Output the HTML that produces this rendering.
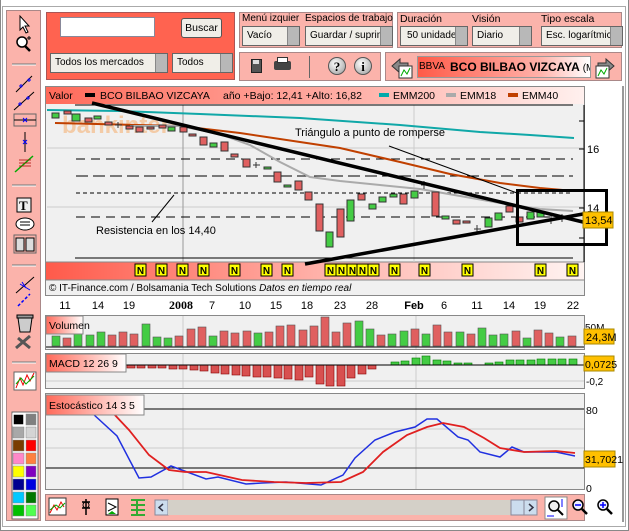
<!DOCTYPE html>
<html><head><meta charset="utf-8"><style>
*{margin:0;padding:0;box-sizing:border-box}
body{width:629px;height:531px;background:#fff;position:relative;overflow:hidden;font-family:"Liberation Sans",sans-serif;font-size:11px;color:#000}
.a{position:absolute}
.pk{background:#fbb3ab;border:1px solid #a88}
.sel{position:absolute;height:20px;background:#f0eee8;border:1px solid #666;font-size:10px;padding:3px 0 0 4px;white-space:nowrap;overflow:hidden}
.sel:after{content:"";position:absolute;right:0;top:0;width:11px;height:18px;background:#b8b8b8;border-left:1px solid #888}
.lb{position:absolute;font-size:10.5px;white-space:nowrap}
</style></head><body>
<div class="a" style="left:0;top:0;width:629px;height:531px;border:1px solid #888;border-top:none"></div>
<div class="a" style="left:2px;top:6px;width:624px;height:521px;border:1px solid #aaa"></div>
<div class="a pk" style="left:6px;top:10px;width:35px;height:511px"></div>
<div class="a" style="left:46px;top:12px;width:189px;height:68px;background:#ff6350;border:1px solid #a55"></div>
<div class="a" style="left:60px;top:17px;width:95px;height:20px;background:#fff;border:1px solid #889"></div>
<div class="a" style="left:181px;top:18px;width:41px;height:20px;background:#f0eee8;border:1px solid #555;border-radius:3px;font-size:10.5px;text-align:center;padding-top:3px">Buscar</div>
<div class="sel" style="left:50px;top:53px;width:118px">Todos los mercados</div>
<div class="sel" style="left:172px;top:53px;width:61px">Todos</div>
<div class="a pk" style="left:239px;top:12px;width:154px;height:36px"></div>
<div class="lb" style="left:242px;top:13px;font-size:10px">Menú izquier</div>
<div class="lb" style="left:305px;top:13px;font-size:10px">Espacios de trabajo</div>
<div class="sel" style="left:242px;top:26px;width:58px">Vacío</div>
<div class="sel" style="left:305px;top:26px;width:88px">Guardar / suprimir</div>
<div class="a pk" style="left:397px;top:12px;width:225px;height:36px"></div>
<div class="lb" style="left:400px;top:13px">Duración</div>
<div class="lb" style="left:472px;top:13px">Visión</div>
<div class="lb" style="left:541px;top:13px">Tipo escala</div>
<div class="sel" style="left:400px;top:26px;width:68px;padding-left:6px">50 unidades</div>
<div class="sel" style="left:472px;top:26px;width:60px">Diario</div>
<div class="sel" style="left:541px;top:26px;width:82px">Esc. logarítmica</div>
<div class="a pk" style="left:239px;top:52px;width:142px;height:29px"></div>
<div class="a" style="left:251px;top:59px;width:11px;height:14px;background:#555;border:1px solid #222"></div>
<div class="a" style="left:253px;top:60px;width:6px;height:4px;background:#ddd"></div>
<div class="a" style="left:274px;top:61px;width:17px;height:9px;background:#444;border-radius:2px"></div>
<div class="a" style="left:277px;top:57px;width:11px;height:6px;background:#fff;border:1px solid #333"></div>
<div class="a" style="left:309px;top:56px;width:1px;height:22px;background:#666"></div>
<div class="a" style="left:328px;top:57px;width:18px;height:18px;border-radius:50%;background:radial-gradient(circle at 40% 35%,#fff,#999);border:1px solid #555;font:bold 13px 'Liberation Serif',serif;text-align:center;line-height:17px">?</div>
<div class="a" style="left:354px;top:57px;width:18px;height:18px;border-radius:50%;background:radial-gradient(circle at 40% 35%,#fff,#999);border:1px solid #555;font:bold 13px 'Liberation Serif',serif;text-align:center;line-height:17px">i</div>
<div class="a pk" style="left:385px;top:52px;width:237px;height:29px"></div>
<div class="a" style="left:417px;top:56px;width:174px;height:22px;border:1px solid #999;background:linear-gradient(90deg,#ff5a48,#ffb0a8 70%,#fff);overflow:hidden">
<span class="lb" style="left:1px;top:4px;font-size:10px">BBVA</span>
<span class="lb" style="left:32px;top:3px;font-weight:bold;font-size:12px">BCO BILBAO VIZCAYA <span style="font-weight:normal;font-size:10px">(M</span></span></div>
<svg class="a" style="left:0;top:0" width="629" height="531" viewBox="0 0 629 531">
<path d="M392 66l8-7v4h8v6h-8v4z" fill="#888" stroke="#333"/><rect x="399" y="66" width="13" height="12" fill="#fff" stroke="#333"/><path d="M401 76l3-6 3 4 3-6" stroke="#0a0" fill="none"/>
<path d="M614 66l-8-7v4h-8v6h8v4z" fill="#888" stroke="#333"/><rect x="596" y="66" width="13" height="12" fill="#fff" stroke="#333"/><path d="M598 76l3-6 3 4 3-6" stroke="#0a0" fill="none"/>
<path d="M20 16v14l3-3 3 6 2-1-3-6h4z" fill="#fff" stroke="#000"/>
<circle cx="22" cy="42" r="5" fill="#fff" stroke="#000" stroke-width="1.5"/><path d="M25 46l5 5" stroke="#000" stroke-width="2.5"/><path d="M27 38h4M29 36v4" stroke="#000"/>
<line x1="12" y1="64" x2="36" y2="64" stroke="#777"/><line x1="12" y1="65" x2="36" y2="65" stroke="#fff"/>
<path d="M16 92l16-16" stroke="#000"/><path d="M19 86h4M21 84v4M27 80h4M29 78v4" stroke="#00f"/>
<path d="M14 110l20-18" stroke="#000"/><path d="M18 104h4M20 102v4M26 98h4M28 96v4" stroke="#00f"/>
<rect x="14" y="114" width="22" height="12" fill="none" stroke="#666"/><path d="M14 120h22" stroke="#000"/><path d="M23 118l4 4M27 118l-4 4" stroke="#00f"/>
<path d="M25 132v20" stroke="#000"/><path d="M23 140l4 4M27 140l-4 4" stroke="#00f"/>
<path d="M15 172l18-16" stroke="#0a0" stroke-width="1.5"/><path d="M19 160h12M19 163h12M19 166h12" stroke="#a00" stroke-width=".7"/>
<line x1="12" y1="185" x2="36" y2="185" stroke="#777"/><line x1="12" y1="186" x2="36" y2="186" stroke="#fff"/>
<rect x="17" y="198" width="14" height="14" fill="#eee" stroke="#000"/><text x="19" y="210" font-family="Liberation Serif" font-weight="bold" font-size="13">T</text>
<ellipse cx="25" cy="224" rx="9" ry="6" fill="#fff" stroke="#000"/><path d="M20 222h10M20 225h10" stroke="#000"/>
<rect x="14" y="235" width="22" height="18" fill="none" stroke="#666"/><path d="M16 238h8v13h-8zM26 238h8v13h-8z" fill="#ddd" stroke="#000"/>
<line x1="12" y1="265" x2="36" y2="265" stroke="#777"/><line x1="12" y1="266" x2="36" y2="266" stroke="#fff"/>
<path d="M16 293l18-16" stroke="#000"/><path d="M20 284l10 6M22 282l4 6" stroke="#00f"/>
<path d="M18 306l12-12" stroke="#00f" stroke-dasharray="3 2" stroke-width="1.5"/>
<path d="M18 318h14l-2 14h-10z" fill="#ccc" stroke="#000"/><rect x="17" y="315" width="16" height="3" fill="#999" stroke="#000"/>
<path d="M16 348l14-12M18 338l12 10" stroke="#555" stroke-width="3"/>
<line x1="12" y1="362" x2="36" y2="362" stroke="#777"/><line x1="12" y1="363" x2="36" y2="363" stroke="#fff"/>
<rect x="14" y="372" width="22" height="18" fill="#fff" stroke="#666"/><path d="M16 388l4-10 3 7 4-10 3 6 4-8" stroke="#e00" fill="none"/><path d="M16 384l5-6 5 6 8-8" stroke="#0a0" fill="none"/>
<rect x="12" y="412" width="26" height="107" fill="#fff" stroke="#666"/>
<g stroke="#888" stroke-width=".5">
<rect x="13" y="414" width="11" height="11" fill="#000" stroke="#fff" stroke-width="1.5"/><rect x="26" y="414" width="10" height="11" fill="#808080"/>
<rect x="13" y="427" width="11" height="11" fill="#a8a8a8"/><rect x="26" y="427" width="10" height="11" fill="#d4d4d4"/>
<rect x="13" y="440" width="11" height="11" fill="#7a3c00"/><rect x="26" y="440" width="10" height="11" fill="#f00"/>
<rect x="13" y="453" width="11" height="11" fill="#ff88c8"/><rect x="26" y="453" width="10" height="11" fill="#ff8040"/>
<rect x="13" y="466" width="11" height="11" fill="#ff0"/><rect x="26" y="466" width="10" height="11" fill="#8000c0"/>
<rect x="13" y="479" width="11" height="11" fill="#000090"/><rect x="26" y="479" width="10" height="11" fill="#0000e0"/>
<rect x="13" y="492" width="11" height="11" fill="#00c8ff"/><rect x="26" y="492" width="10" height="11" fill="#007800"/>
<rect x="13" y="505" width="11" height="11" fill="#00c000"/><rect x="26" y="505" width="10" height="11" fill="#50ff50"/>
</g>
<defs>
<linearGradient id="hg" x1="0" x2="1"><stop offset="0" stop-color="#ff6a5a"/><stop offset=".6" stop-color="#ffb4ac"/><stop offset="1" stop-color="#fff0ee"/></linearGradient>
<linearGradient id="ng" x1="0" x2="1"><stop offset="0" stop-color="#ff5a4a"/><stop offset=".5" stop-color="#ffb0a8"/><stop offset="1" stop-color="#fff4f2"/></linearGradient>
<linearGradient id="lg" x1="0" x2="1"><stop offset="0" stop-color="#ff6a5a"/><stop offset="1" stop-color="#fff"/></linearGradient>
</defs>
<rect x="45.5" y="86.5" width="539" height="209" fill="#f0f0f0" stroke="#888"/>
<rect x="46" y="87" width="538" height="17" fill="url(#hg)"/>
<rect x="46" y="262" width="538" height="18" fill="url(#ng)"/>
<line x1="46" y1="262" x2="584" y2="262" stroke="#888"/><line x1="46" y1="280" x2="584" y2="280" stroke="#888"/>
<text x="49" y="99" font-size="10.5">Valor</text><rect x="85" y="93" width="10" height="4" fill="#000"/>
<text x="100" y="99" font-size="10.5">BCO BILBAO VIZCAYA</text>
<text x="223" y="99" font-size="10.5">año +Bajo: 12,41 +Alto: 16,82</text>
<rect x="379" y="93" width="10" height="4" fill="#0aa"/><text x="393" y="99" font-size="10.5">EMM200</text>
<rect x="446" y="93" width="10" height="4" fill="#aaa"/><text x="460" y="99" font-size="10.5">EMM18</text>
<rect x="508" y="93" width="10" height="4" fill="#c04000"/><text x="522" y="99" font-size="10.5">EMM40</text>
<g stroke="#ccc"><line x1="414" y1="105" x2="414" y2="262"/><line x1="47" y1="148" x2="583" y2="148"/><line x1="47" y1="207" x2="583" y2="207"/></g>
<line x1="183" y1="105" x2="183" y2="262" stroke="#999"/>
<line x1="75" y1="105" x2="573" y2="105" stroke="#000"/><line x1="75" y1="258" x2="573" y2="258" stroke="#000"/>
<g stroke="#000"><line x1="76" y1="159" x2="573" y2="159" stroke-dasharray="9 6"/><line x1="76" y1="176" x2="573" y2="176" stroke-dasharray="12 5"/><line x1="76" y1="193" x2="573" y2="193" stroke-dasharray="4 3"/><line x1="76" y1="217" x2="573" y2="217" stroke-dasharray="9 6"/></g>
<text x="62" y="133" font-size="24" fill="#f8a050" opacity=".45" font-weight="bold">bankinter</text>
<polyline points="47,110 120,111 200,114 300,118 400,125 480,132 530,135 574,138" fill="none" stroke="#10a8a8" stroke-width="2"/>
<polyline points="55,123 180,126 240,133 300,142 340,148 400,162 450,174 500,183 540,188 574,191" fill="none" stroke="#c04000" stroke-width="2"/>
<polyline points="130,126 180,126 220,134 250,145 280,162 310,177 340,181 380,185 420,189 460,196 500,203 540,209 573,211" fill="none" stroke="#aaa" stroke-width="2"/>
<g stroke="#333" stroke-width="1">
<g fill="#4c4"><rect x="52" y="113" width="7" height="5"/><rect x="72" y="114" width="8" height="7"/><rect x="94" y="116" width="7" height="3"/><rect x="168" y="127" width="7" height="4"/><rect x="210" y="143" width="7" height="4"/><rect x="264" y="167" width="7" height="2"/><rect x="284" y="185" width="7" height="2"/><rect x="326" y="232" width="7" height="15"/><rect x="347" y="200" width="7" height="21"/><rect x="369" y="204" width="7" height="5"/><rect x="379" y="197" width="7" height="5"/><rect x="390" y="194" width="7" height="3"/><rect x="411" y="191" width="7" height="7"/><rect x="442" y="216" width="7" height="3"/><rect x="485" y="218" width="7" height="9"/><rect x="495" y="213" width="7" height="7"/><rect x="527" y="212" width="7" height="7"/><rect x="537" y="212" width="7" height="5"/></g>
<g fill="#e06060"><rect x="64" y="111" width="7" height="3"/><rect x="85" y="118" width="7" height="4"/><rect x="105" y="122" width="7" height="3"/><rect x="126" y="126" width="7" height="3"/><rect x="136" y="127" width="7" height="5"/><rect x="147" y="127" width="7" height="2"/><rect x="159" y="125" width="7" height="3"/><rect x="180" y="127" width="7" height="5"/><rect x="189" y="134" width="7" height="2"/><rect x="200" y="137" width="7" height="8"/><rect x="221" y="142" width="7" height="9"/><rect x="231" y="154" width="7" height="3"/><rect x="243" y="159" width="7" height="8"/><rect x="274" y="172" width="7" height="10"/><rect x="295" y="181" width="7" height="9"/><rect x="305" y="192" width="7" height="8"/><rect x="316" y="204" width="7" height="27"/><rect x="337" y="209" width="7" height="28"/><rect x="358" y="194" width="7" height="6"/><rect x="400" y="194" width="7" height="10"/><rect x="432" y="192" width="7" height="24"/><rect x="453" y="220" width="7" height="4"/><rect x="463" y="221" width="7" height="2"/><rect x="506" y="206" width="7" height="6"/><rect x="516" y="217" width="7" height="5"/></g>
<path d="M115 125h7M118 122v6M253 165h7M256 162v6M421 185h7M424 181v8M474 229h7M477 225v8M548 220h7M551 216v8M559 218h7M562 214v8"/>
</g>
<line x1="92" y1="103" x2="583" y2="222" stroke="#000" stroke-width="3.5"/>
<line x1="305" y1="264" x2="583" y2="214" stroke="#000" stroke-width="3.5"/>
<line x1="389" y1="146" x2="517" y2="193" stroke="#000" stroke-width="1"/>
<line x1="152" y1="222" x2="174" y2="195" stroke="#000" stroke-width="1"/>
<rect x="517.5" y="190.5" width="89" height="54" fill="none" stroke="#000" stroke-width="3"/>
<text x="295" y="136" font-size="11">Triángulo a punto de romperse</text>
<text x="96" y="234" font-size="11">Resistencia en los 14,40</text>
<g font-size="10" font-weight="bold" text-anchor="middle">
<g fill="#ff0" stroke="#000"><rect x="135" y="264" width="11" height="12"/><rect x="156" y="264" width="11" height="12"/><rect x="177" y="264" width="11" height="12"/><rect x="198" y="264" width="11" height="12"/><rect x="229" y="264" width="11" height="12"/><rect x="261" y="264" width="11" height="12"/><rect x="282" y="264" width="11" height="12"/><rect x="325" y="264" width="11" height="12"/><rect x="336" y="264" width="11" height="12"/><rect x="347" y="264" width="11" height="12"/><rect x="357" y="264" width="11" height="12"/><rect x="368" y="264" width="11" height="12"/><rect x="389" y="264" width="11" height="12"/><rect x="419" y="264" width="11" height="12"/><rect x="462" y="264" width="11" height="12"/><rect x="535" y="264" width="11" height="12"/><rect x="567" y="264" width="11" height="12"/></g>
<text x="140.5" y="274">N</text><text x="161.5" y="274">N</text><text x="182.5" y="274">N</text><text x="203.5" y="274">N</text><text x="234.5" y="274">N</text><text x="266.5" y="274">N</text><text x="287.5" y="274">N</text><text x="330.5" y="274">N</text><text x="341.5" y="274">N</text><text x="352.5" y="274">N</text><text x="362.5" y="274">N</text><text x="373.5" y="274">N</text><text x="394.5" y="274">N</text><text x="424.5" y="274">N</text><text x="467.5" y="274">N</text><text x="540.5" y="274">N</text><text x="572.5" y="274">N</text>
</g>
<text x="49" y="291" font-size="10">© IT-Finance.com / Bolsamania Tech Solutions <tspan font-style="italic">Datos en tiempo real</tspan></text>
<line x1="584" y1="105" x2="584" y2="262" stroke="#000"/>
<g stroke="#000"><line x1="579" y1="121" x2="584" y2="121"/><line x1="579" y1="149" x2="584" y2="149"/><line x1="579" y1="208" x2="584" y2="208"/><line x1="579" y1="238" x2="584" y2="238"/></g>
<text x="587" y="153" font-size="11">16</text><text x="587" y="212" font-size="11">14</text>
<rect x="583" y="212" width="30" height="16" fill="#ffc000" stroke="#a80"/><text x="585" y="224" font-size="11">13,54</text>
<line x1="623" y1="86" x2="623" y2="522" stroke="#333"/>
<g font-size="11" text-anchor="middle"><text x="65" y="309">11</text><text x="98" y="309">14</text><text x="129" y="309">19</text><text x="181" y="309" font-weight="bold" font-family="Liberation Serif" font-size="12">2008</text><text x="212" y="309">7</text><text x="245" y="309">10</text><text x="276" y="309">15</text><text x="307" y="309">18</text><text x="340" y="309">23</text><text x="372" y="309">28</text><text x="414" y="309" font-weight="bold">Feb</text><text x="444" y="309">6</text><text x="477" y="309">11</text><text x="509" y="309">14</text><text x="540" y="309">19</text><text x="573" y="309">22</text></g>
<rect x="45.5" y="315.5" width="539" height="34" fill="#f0f0f0" stroke="#888"/>
<g stroke="#ccc"><line x1="183" y1="316" x2="183" y2="349"/><line x1="416" y1="316" x2="416" y2="349"/></g>
<g stroke="#555" stroke-width=".6">
<rect x="52" y="336" width="8" height="10" fill="#4c4"/><rect x="63" y="338" width="8" height="8" fill="#e06060"/><rect x="74" y="333" width="8" height="13" fill="#4c4"/><rect x="86" y="335" width="8" height="11" fill="#4c4"/><rect x="97" y="332" width="8" height="14" fill="#4c4"/><rect x="108" y="335" width="8" height="11" fill="#e06060"/><rect x="119" y="332" width="8" height="14" fill="#e06060"/><rect x="130" y="334" width="8" height="12" fill="#e06060"/><rect x="142" y="324" width="8" height="22" fill="#4c4"/><rect x="153" y="337" width="8" height="9" fill="#4c4"/><rect x="164" y="338" width="8" height="8" fill="#4c4"/><rect x="175" y="336" width="8" height="10" fill="#e06060"/><rect x="187" y="329" width="8" height="17" fill="#e06060"/><rect x="198" y="327" width="8" height="19" fill="#e06060"/><rect x="209" y="336" width="8" height="10" fill="#4c4"/><rect x="220" y="331" width="8" height="15" fill="#e06060"/><rect x="231" y="333" width="8" height="13" fill="#e06060"/><rect x="243" y="331" width="8" height="15" fill="#e06060"/><rect x="254" y="333" width="8" height="13" fill="#4c4"/><rect x="265" y="332" width="8" height="14" fill="#e06060"/><rect x="276" y="326" width="8" height="20" fill="#e06060"/><rect x="287" y="325" width="8" height="21" fill="#e06060"/><rect x="299" y="330" width="8" height="16" fill="#e06060"/><rect x="310" y="326" width="8" height="20" fill="#e06060"/><rect x="321" y="317" width="8" height="29" fill="#e06060"/><rect x="332" y="332" width="8" height="14" fill="#e06060"/><rect x="343" y="323" width="8" height="23" fill="#e06060"/><rect x="355" y="321" width="8" height="25" fill="#4c4"/><rect x="366" y="329" width="8" height="17" fill="#4c4"/><rect x="377" y="335" width="8" height="11" fill="#e06060"/><rect x="388" y="334" width="8" height="12" fill="#4c4"/><rect x="400" y="331" width="8" height="15" fill="#4c4"/><rect x="411" y="329" width="8" height="17" fill="#e06060"/><rect x="422" y="334" width="8" height="12" fill="#4c4"/><rect x="433" y="325" width="8" height="21" fill="#e06060"/><rect x="444" y="332" width="8" height="14" fill="#e06060"/><rect x="456" y="332" width="8" height="14" fill="#4c4"/><rect x="467" y="334" width="8" height="12" fill="#e06060"/><rect x="478" y="328" width="8" height="18" fill="#4c4"/><rect x="489" y="335" width="8" height="11" fill="#4c4"/><rect x="500" y="334" width="8" height="12" fill="#4c4"/><rect x="512" y="331" width="8" height="15" fill="#e06060"/><rect x="523" y="338" width="8" height="8" fill="#4c4"/><rect x="534" y="330" width="8" height="16" fill="#e06060"/><rect x="545" y="333" width="8" height="13" fill="#e06060"/><rect x="556" y="337" width="8" height="9" fill="#4c4"/><rect x="568" y="336" width="8" height="10" fill="#e06060"/>
</g>
<line x1="46" y1="347" x2="584" y2="347" stroke="#000"/>
<rect x="46" y="316" width="37" height="18" fill="url(#lg)" stroke="#888"/><text x="49" y="329" font-size="10.5">Volumen</text>
<text x="585" y="331" font-size="10">50M</text>
<rect x="584" y="329" width="30" height="15" fill="#ffc000" stroke="#a80"/><text x="586" y="341" font-size="11">24,3M</text>
<rect x="45.5" y="353.5" width="539" height="35" fill="#f0f0f0" stroke="#888"/>
<g stroke="#ccc"><line x1="183" y1="354" x2="183" y2="388"/><line x1="416" y1="354" x2="416" y2="388"/><line x1="46" y1="381" x2="584" y2="381"/></g>
<g stroke="#800" stroke-width=".6" fill="#d85050">
<rect x="127" y="365" width="8" height="3"/><rect x="137" y="365" width="8" height="3"/><rect x="148" y="365" width="8" height="3"/><rect x="158" y="365" width="8" height="3"/><rect x="169" y="365" width="8" height="4"/><rect x="179" y="365" width="8" height="4"/><rect x="190" y="365" width="8" height="5"/><rect x="200" y="365" width="8" height="6"/><rect x="211" y="365" width="8" height="8"/><rect x="221" y="365" width="8" height="9"/><rect x="232" y="365" width="8" height="10"/><rect x="242" y="365" width="8" height="11"/><rect x="253" y="365" width="8" height="12"/><rect x="263" y="365" width="8" height="12"/><rect x="274" y="365" width="8" height="13"/><rect x="284" y="365" width="8" height="14"/><rect x="295" y="365" width="8" height="15"/><rect x="316" y="365" width="8" height="19"/><rect x="326" y="365" width="8" height="21"/><rect x="337" y="365" width="8" height="21"/><rect x="347" y="365" width="8" height="13"/><rect x="358" y="365" width="8" height="9"/><rect x="368" y="365" width="8" height="4"/><rect x="305" y="365" width="8" height="12"/>
</g>
<g stroke="#070" stroke-width=".6" fill="#4c4">
<rect x="391" y="362" width="8" height="3"/><rect x="401" y="361" width="8" height="4"/><rect x="412" y="358" width="8" height="7"/><rect x="422" y="356" width="8" height="9"/><rect x="433" y="360" width="8" height="5"/><rect x="443" y="361" width="8" height="4"/><rect x="454" y="363" width="8" height="2"/><rect x="464" y="363" width="8" height="2"/><rect x="485" y="363" width="8" height="2"/><rect x="495" y="362" width="8" height="3"/><rect x="506" y="360" width="8" height="5"/><rect x="516" y="360" width="8" height="5"/><rect x="527" y="360" width="8" height="5"/><rect x="537" y="359" width="8" height="6"/><rect x="548" y="359" width="8" height="6"/><rect x="558" y="359" width="8" height="6"/><rect x="569" y="359" width="8" height="6"/>
</g>
<line x1="46" y1="365" x2="584" y2="365" stroke="#000"/>
<rect x="46" y="354" width="80" height="18" fill="url(#lg)" stroke="#888"/><text x="49" y="367" font-size="10.5">MACD 12 26 9</text>
<rect x="584" y="356" width="30" height="15" fill="#ffc000" stroke="#a80"/><text x="585" y="368" font-size="10.5">0,0725</text>
<text x="586" y="385" font-size="10">-0,2</text>
<rect x="45.5" y="393.5" width="539" height="96" fill="#f0f0f0" stroke="#888"/>
<g stroke="#ccc"><line x1="183" y1="394" x2="183" y2="489"/><line x1="416" y1="394" x2="416" y2="489"/><line x1="46" y1="429" x2="584" y2="429"/><line x1="46" y1="448" x2="584" y2="448"/></g>
<line x1="46" y1="409" x2="584" y2="409" stroke="#000"/><line x1="46" y1="468" x2="584" y2="468" stroke="#000"/>
<polyline points="92,413 117,436 139,478 151,477 171,466 206,479 218,477 246,484 262,483 286,482 321,485 343,475 355,458 375,440 395,432 415,427 427,419 437,419 458,437 468,440 480,452 500,457 512,447 524,452 540,452 556,452 575,456" fill="none" stroke="#2030e0" stroke-width="1.5"/>
<polyline points="113,413 129,430 149,455 169,470 185,472 206,472 242,480 274,482 306,483 341,482 363,472 383,452 407,435 427,427 443,423 464,427 484,438 500,448 524,452 556,451 575,453" fill="none" stroke="#e02020" stroke-width="1.8"/>
<rect x="46" y="395" width="98" height="20" fill="url(#lg)" stroke="#888"/><text x="49" y="409" font-size="10.5">Estocástico 14 3 5</text>
<text x="586" y="414" font-size="10.5">80</text>
<rect x="584" y="451" width="31" height="16" fill="#ffc000" stroke="#a80"/><text x="585" y="463" font-size="10.5">31,7021</text>
<text x="586" y="492" font-size="10.5">0</text>
<rect x="45.5" y="494.5" width="539" height="26" fill="#fbb3ab" stroke="#a88"/>
<rect x="49" y="498" width="17" height="17" fill="#fff" stroke="#333"/><path d="M50 513l4-8 3 5 4-8 3 5" stroke="#e00" fill="none"/><path d="M50 510l6-5 4 3 5-5" stroke="#0a0" fill="none"/>
<path d="M86 499v16M82 502h8M82 508h8" stroke="#000" stroke-width="1.5"/><circle cx="86" cy="505" r="3" fill="none" stroke="#000"/>
<rect x="106" y="499" width="12" height="16" fill="#fff" stroke="#000"/><path d="M108 503l8 4-8 4" stroke="#000" fill="none"/><path d="M108 514l4-3 4 3" fill="#0a0"/>
<path d="M131 500h14M131 505h14M131 510h14M131 515h14M137 500v15" stroke="#3a3" stroke-width="2"/>
<rect x="155" y="500" width="13" height="15" fill="#cde" stroke="#889"/><path d="M163 504l-4 3.5 4 3.5" stroke="#334" fill="none" stroke-width="1.5"/>
<rect x="168" y="500" width="352" height="15" fill="#d4d0c8"/>
<rect x="511" y="500" width="13" height="15" fill="#cde" stroke="#889"/><rect x="524" y="500" width="13" height="15" fill="#cde" stroke="#889"/><path d="M529 504l4 3.5-4 3.5" stroke="#334" fill="none" stroke-width="1.5"/>
<rect x="545" y="497" width="22" height="22" fill="#fff" stroke="#888"/><circle cx="554" cy="506" r="5" fill="#eee" stroke="#000" stroke-width="1.5"/><path d="M558 510l5 5" stroke="#000" stroke-width="2"/><path d="M547 516h7M562 499v8" stroke="#00f"/>
<circle cx="578" cy="505" r="5" fill="#eef" stroke="#000" stroke-width="1.5"/><path d="M582 509l5 5" stroke="#000" stroke-width="2.5"/><path d="M575 505h6" stroke="#00f" stroke-width="1.5"/>
<circle cx="603" cy="505" r="5" fill="#eef" stroke="#000" stroke-width="1.5"/><path d="M607 509l5 5" stroke="#000" stroke-width="2.5"/><path d="M600 505h6M603 502v6" stroke="#00f" stroke-width="1.5"/>
</svg>
</body></html>
